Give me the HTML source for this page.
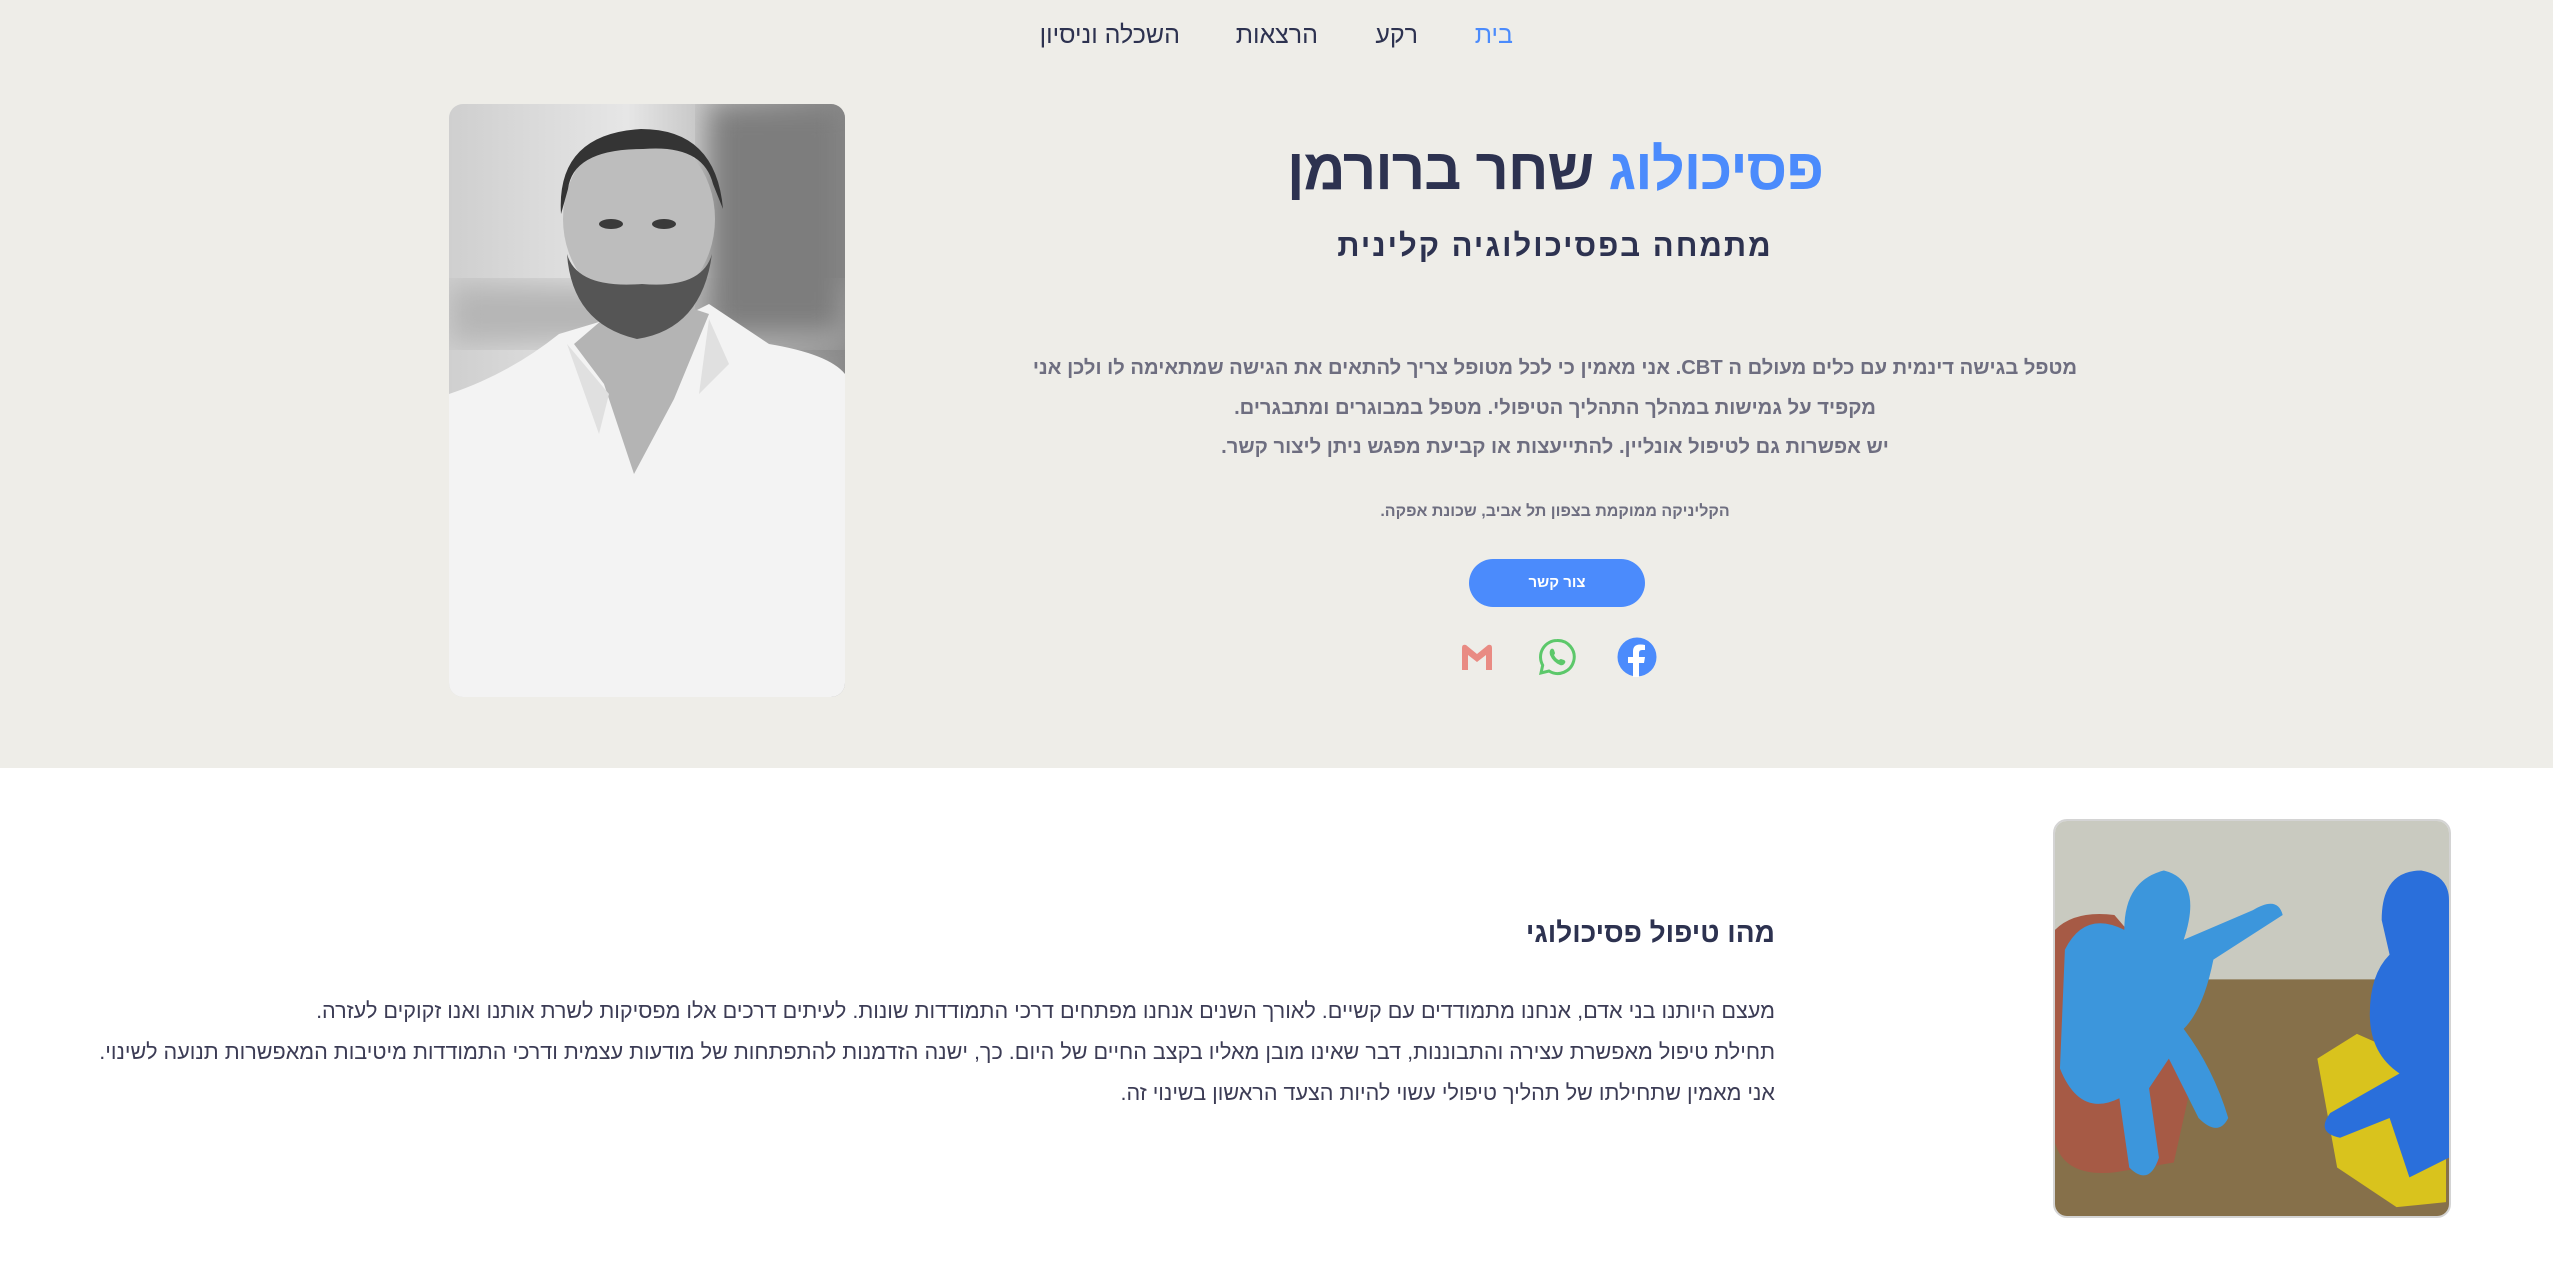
<!DOCTYPE html>
<html lang="he" dir="rtl"><head><meta charset="utf-8">
<style>
*{margin:0;padding:0;box-sizing:border-box}
body{width:2553px;height:1265px;overflow:hidden;background:#fff;font-family:"Liberation Sans","DejaVu Sans",sans-serif;position:relative}
.hero{position:absolute;left:0;top:0;width:2553px;height:768px;background:#eeede8}
.abs{position:absolute;white-space:nowrap}
.nav{font-size:25px;color:#2d3250;top:21px}
.center{position:absolute;left:1000px;width:1110px;text-align:center;white-space:nowrap}
</style></head><body>
<div class="hero"></div>
<div class="abs nav" style="right:1040px;color:#4b8bfc">בית</div>
<div class="abs nav" style="right:1135px">רקע</div>
<div class="abs nav" style="right:1235px">הרצאות</div>
<div class="abs nav" style="right:1373px">השכלה וניסיון</div>

<div class="center" style="top:136px;font-size:58px;font-weight:bold;color:#2d3250;letter-spacing:-1px"><span style="color:#4b8bfc">פסיכולוג</span> שחר ברורמן</div>
<div class="center" style="top:228px;font-size:31px;font-weight:bold;color:#2d3250;letter-spacing:2px">מתמחה בפסיכולוגיה קלינית</div>
<div class="center" style="top:349px;font-size:20.2px;font-weight:bold;color:#6e6e80;line-height:39.5px">מטפל בגישה דינמית עם כלים מעולם ה CBT. אני מאמין כי לכל מטופל צריך להתאים את הגישה שמתאימה לו ולכן אני<br>מקפיד על גמישות במהלך התהליך הטיפולי. מטפל במבוגרים ומתבגרים.<br>יש אפשרות גם לטיפול אונליין. להתייעצות או קביעת מפגש ניתן ליצור קשר.</div>
<div class="center" style="top:503px;font-size:16px;font-weight:bold;color:#6e6e80">הקליניקה ממוקמת בצפון תל אביב, שכונת אפקה.</div>
<div class="abs" style="left:1469px;top:559px;width:176px;height:48px;border-radius:24px;background:#4b8bfc;color:#fff;font-size:15px;font-weight:bold;text-align:center;line-height:48px">צור קשר</div>

<svg class="abs" style="left:1459px;top:640px" width="36" height="34" viewBox="0 0 36 34"><path d="M3 30V8q0-4 4-3l11 9 11-9q4-1 4 3v22h-6V15l-9 7-9-7v15z" fill="#e98b83"/></svg>
<svg class="abs" style="left:1538px;top:638px" width="38" height="38" viewBox="0 0 38 38"><path d="M19 2.5A16.5 16.5 0 0 0 4.7 27.2L3 35l8-2a16.5 16.5 0 1 0 8-30.5z" fill="none" stroke="#5cc86a" stroke-width="3"/><path d="M13 11q2-1 3 1l1 3q0 1-1 2 2 4 5 5 1-1 2-1l3 1q2 1 1 3-2 3-5 2-7-3-10-10-1-4 1-6z" fill="#5cc86a"/></svg>
<svg class="abs" style="left:1617px;top:637px" width="40" height="40" viewBox="0 0 40 40"><circle cx="20" cy="20" r="19.5" fill="#4b8bfc"/><path d="M22 40V26h5l1-6h-6v-4q0-3 3-3h3V8q-2-.5-5-.5-7 0-7 7V20h-5v6h5v14z" fill="#fff"/></svg>

<!-- portrait -->
<svg class="abs" style="left:449px;top:104px;border-radius:14px" width="396" height="593" viewBox="0 0 396 593">
<defs><linearGradient id="bg" x1="0" x2="1"><stop offset="0" stop-color="#cfcfcf"/><stop offset=".45" stop-color="#e6e6e6"/><stop offset="1" stop-color="#8a8a8a"/></linearGradient>
<filter id="bl"><feGaussianBlur stdDeviation="14"/></filter></defs>
<rect width="396" height="593" fill="url(#bg)"/>
<rect x="0" y="180" width="396" height="60" fill="#b5b5b5" filter="url(#bl)"/>
<rect x="260" y="0" width="136" height="230" fill="#7d7d7d" filter="url(#bl)"/>
<path d="M0 290q60-20 110-60l50-15 60 5 40-20 60 40q60 10 76 30v323H0z" fill="#f3f3f3"/>
<path d="M125 240l30 40 30 90 40-75 35-85-30-10-70 10z" fill="#b4b4b4"/>
<path d="M118 240l42 50-10 40zM260 215l20 45-30 30z" fill="#e0e0e0"/>
<ellipse cx="190" cy="115" rx="76" ry="88" fill="#bdbdbd"/>
<path d="M118 150q5 70 70 85 65-10 75-85-10 35-70 30-65 5-75-30z" fill="#555"/>
<path d="M112 110q-5-80 80-85 75 0 82 80l-10-25q-10-40-70-35-70 0-75 40z" fill="#343434"/>
<ellipse cx="162" cy="120" rx="12" ry="5" fill="#3a3a3a"/><ellipse cx="215" cy="120" rx="12" ry="5" fill="#3a3a3a"/>
</svg>

<div class="abs" style="right:778px;top:917px;font-size:28px;font-weight:bold;color:#2d3250">מהו טיפול פסיכולוגי</div>
<div class="abs" style="right:778px;top:990px;font-size:21.6px;color:#3c3c55;line-height:41px;text-align:right">מעצם היותנו בני אדם, אנחנו מתמודדים עם קשיים. לאורך השנים אנחנו מפתחים דרכי התמודדות שונות. לעיתים דרכים אלו מפסיקות לשרת אותנו ואנו זקוקים לעזרה.<br>תחילת טיפול מאפשרת עצירה והתבוננות, דבר שאינו מובן מאליו בקצב החיים של היום. כך, ישנה הזדמנות להתפתחות של מודעות עצמית ודרכי התמודדות מיטיבות המאפשרות תנועה לשינוי.<br>אני מאמין שתחילתו של תהליך טיפולי עשוי להיות הצעד הראשון בשינוי זה.</div>

<svg class="abs" style="left:2053px;top:819px;border-radius:14px;border:2px solid #d4d4d4" width="398" height="399" viewBox="0 0 398 399">
<rect width="398" height="399" fill="#c9cac0"/>
<path d="M0 160h398v239H0z" fill="#86704a"/>
<path d="M0 110q20-20 60-15l60 70 20 90-20 90-60 10q-50 5-60-30z" fill="#a65a45"/>
<path d="M265 240l40-25 90 40v130l-50 5-60-40z" fill="#d9c31d"/>
<path d="M10 130q20-40 60-20 0-50 40-60 40 10 20 70l70-30q25-15 30 5l-70 45q-10 50-30 70 30 40 45 90-10 20-30 0l-30-60-20 30 10 70q-10 30-30 10l-10-70q-40 20-60-30z" fill="#3c96dc"/>
<path d="M330 100q0-50 40-50 28 5 28 30v260l-40 20-20-60-50 20q-25-5-10-25l70-40q-30-20-30-60 0-40 20-60z" fill="#2a6fdb"/>
</svg>
</body></html>
